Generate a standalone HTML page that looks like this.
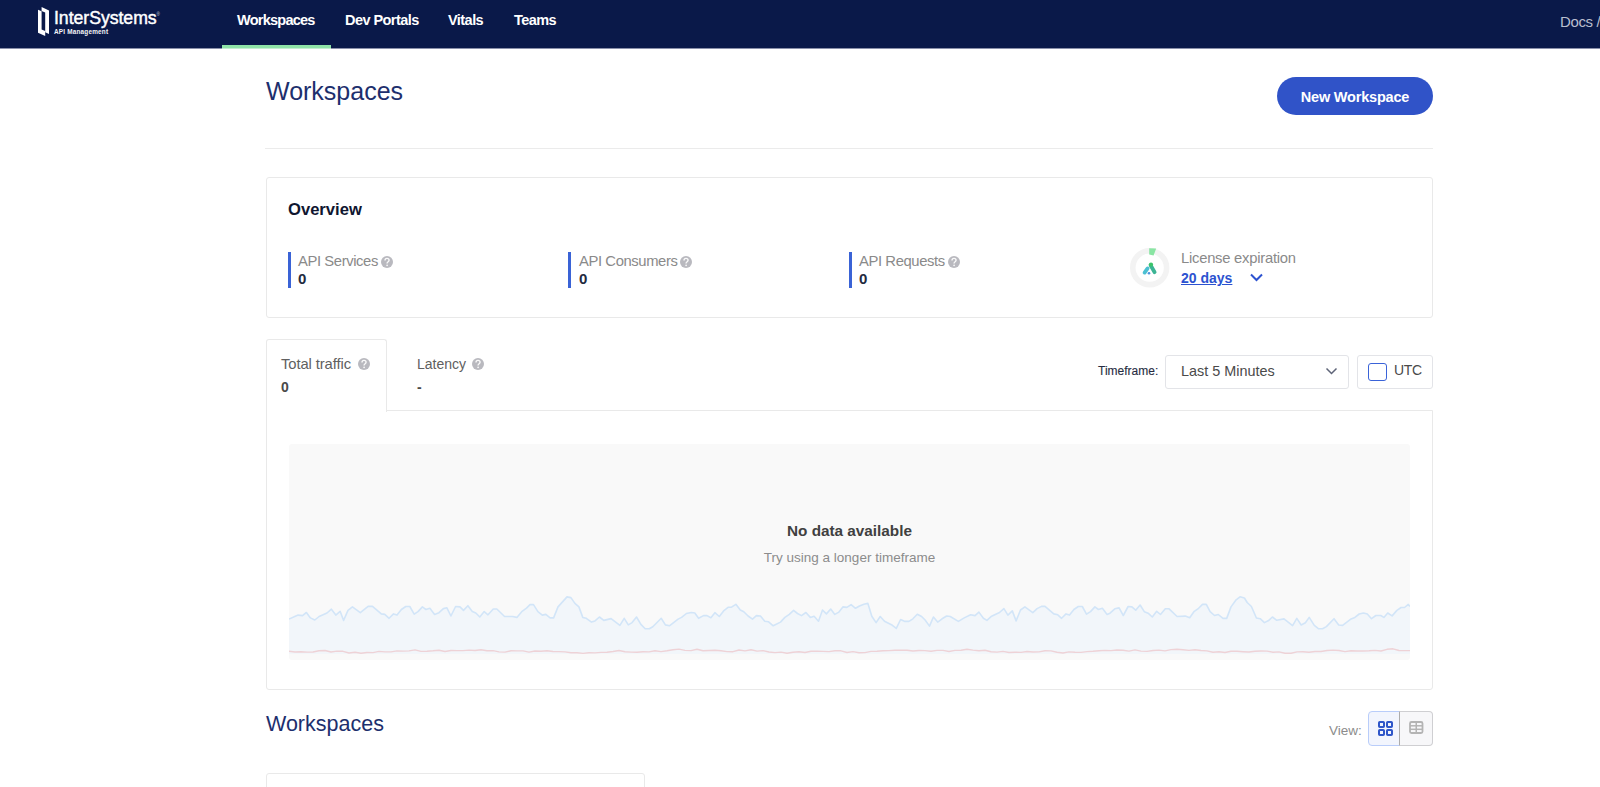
<!DOCTYPE html>
<html><head><meta charset="utf-8">
<style>
*{margin:0;padding:0;box-sizing:border-box}
html,body{width:1600px;height:787px;overflow:hidden;background:#fff;font-family:"Liberation Sans",sans-serif}
.a{position:absolute;white-space:nowrap}
#hdr{position:absolute;left:0;top:0;width:1600px;height:48px;background:#0a1949}
.nav{position:absolute;top:12px;font-size:14.5px;letter-spacing:-0.55px;font-weight:700;color:#fff;line-height:16px}
.card{position:absolute;border:1px solid #e9e9e9;border-radius:3px;background:#fff}
.lbl{font-size:14.8px;letter-spacing:-0.4px;color:#8a8a8a;line-height:16px}
.val{font-size:15px;font-weight:700;color:#232a3e;line-height:16px}
.bar{position:absolute;width:3px;height:36px;background:#3a63d6}
.help{position:absolute;width:12px;height:12px}
</style></head><body>
<div id="hdr">
  <svg class="a" style="left:0;top:0" width="60" height="48" viewBox="0 0 60 48">
    <path d="M38,9.7 L41.6,11.3 L41.6,29.4 L45.2,31 L45.2,36 L38,32.8 Z" fill="#fff"/>
    <path d="M41.6,7 L49,10.6 L49,34 L45.2,32.3 L45.2,12.6 L41.6,11 Z" fill="#fff"/>
  </svg>
  <div class="a" style="left:54px;top:8px;font-size:17.7px;font-weight:400;color:#fff;letter-spacing:-0.05px;line-height:20px;-webkit-text-stroke:0.45px #fff">InterSystems</div>
  <div class="a" style="left:156.5px;top:11.5px;font-size:4.5px;line-height:6px;color:#d0d4de">&#174;</div>
  <div class="a" style="left:54px;top:28px;font-size:6.4px;font-weight:700;letter-spacing:0.2px;color:#f4f5f8;line-height:7px">API Management</div>
  <div class="nav" style="left:237px;letter-spacing:-0.75px">Workspaces</div>
  <div class="nav" style="left:345px">Dev Portals</div>
  <div class="nav" style="left:448px">Vitals</div>
  <div class="nav" style="left:514px">Teams</div>
  <div class="a" style="left:0;top:48px;width:1600px;height:1px;background:#8a90aa"></div>
  <div class="a" style="left:222px;top:45px;width:109px;height:3px;background:#8fe3a8"></div>
  <div class="a" style="left:222px;top:48px;width:109px;height:1px;background:#c4f0d0"></div>
  <div class="a" style="left:1560px;top:13px;font-size:15px;letter-spacing:-0.35px;color:#b9bfcf;line-height:17px">Docs /</div>
</div>

<div class="a" style="left:266px;top:77px;font-size:25px;color:#1d2f6d;line-height:28px">Workspaces</div>
<div class="a" style="left:1277px;top:77px;width:156px;height:38px;border-radius:19px;background:#3053c8;color:#fff;font-size:14.5px;letter-spacing:-0.2px;font-weight:700;line-height:40px;text-align:center">New Workspace</div>
<div class="a" style="left:265px;top:148px;width:1168px;height:1px;background:#ebebeb"></div>

<div class="card" style="left:266px;top:177px;width:1167px;height:141px"></div>
<div class="a" style="left:288px;top:200px;font-size:16.6px;font-weight:700;color:#0f1630;line-height:20px">Overview</div>

<div class="bar" style="left:288px;top:252px"></div>
<div class="a lbl" style="left:298px;top:253px">API Services</div>
<div class="help" style="left:381px;top:256px"><svg width="12" height="12" viewBox="0 0 12 12" style="display:block"><circle cx="6" cy="6" r="6" fill="#b9b9bf"/><path d="M4,4.4 C4,3.1 4.9,2.4 6,2.4 C7.2,2.4 8.1,3.1 8.1,4.3 C8.1,5.5 6.2,5.8 6.1,7 L6.1,7.6" stroke="#fafafa" stroke-width="1.35" fill="none"/><circle cx="6.1" cy="9.35" r="0.85" fill="#fafafa"/></svg></div>
<div class="a val" style="left:298px;top:271px">0</div>

<div class="bar" style="left:568px;top:252px"></div>
<div class="a lbl" style="left:579px;top:253px">API Consumers</div>
<div class="help" style="left:680px;top:256px"><svg width="12" height="12" viewBox="0 0 12 12" style="display:block"><circle cx="6" cy="6" r="6" fill="#b9b9bf"/><path d="M4,4.4 C4,3.1 4.9,2.4 6,2.4 C7.2,2.4 8.1,3.1 8.1,4.3 C8.1,5.5 6.2,5.8 6.1,7 L6.1,7.6" stroke="#fafafa" stroke-width="1.35" fill="none"/><circle cx="6.1" cy="9.35" r="0.85" fill="#fafafa"/></svg></div>
<div class="a val" style="left:579px;top:271px">0</div>

<div class="bar" style="left:849px;top:252px"></div>
<div class="a lbl" style="left:859px;top:253px">API Requests</div>
<div class="help" style="left:948px;top:256px"><svg width="12" height="12" viewBox="0 0 12 12" style="display:block"><circle cx="6" cy="6" r="6" fill="#b9b9bf"/><path d="M4,4.4 C4,3.1 4.9,2.4 6,2.4 C7.2,2.4 8.1,3.1 8.1,4.3 C8.1,5.5 6.2,5.8 6.1,7 L6.1,7.6" stroke="#fafafa" stroke-width="1.35" fill="none"/><circle cx="6.1" cy="9.35" r="0.85" fill="#fafafa"/></svg></div>
<div class="a val" style="left:859px;top:271px">0</div>

<svg class="a" style="left:1128px;top:246px" width="44" height="44" viewBox="0 0 44 44">
  <circle cx="21.7" cy="21.7" r="16.9" fill="none" stroke="#f3f3f3" stroke-width="5.6"/>
  <path d="M21.2,2.2 L28.2,2.6 L25.6,9.4 L21.2,8.6 Z" fill="#8ae5a3"/>
  <line x1="22.6" y1="19.2" x2="26.6" y2="26.2" stroke="#3cb494" stroke-width="3.8" stroke-linecap="round"/>
  <line x1="19.6" y1="22.4" x2="16.6" y2="26.6" stroke="#4cc0d2" stroke-width="3.8" stroke-linecap="round"/>
  <circle cx="23" cy="18.6" r="2.1" fill="#3cc46a"/>
  <circle cx="21" cy="27.3" r="1.3" fill="#4d92de"/>
</svg>
<div class="a lbl" style="left:1181px;top:250px;letter-spacing:-0.25px">License expiration</div>
<div class="a" style="left:1181px;top:270px;font-size:14px;font-weight:700;color:#2c52d0;line-height:16px;text-decoration:underline">20 days</div>
<svg class="a" style="left:1249px;top:271.5px" width="15" height="10" viewBox="0 0 15 10"><path d="M2,2.5 L7.5,8 L13,2.5" fill="none" stroke="#2c52d0" stroke-width="2"/></svg>

<!-- chart card -->
<div class="card" style="left:266px;top:410px;width:1167px;height:280px;border-radius:0 0 3px 3px"></div>
<div class="a" style="left:266px;top:339px;width:121px;height:73px;border:1px solid #e9e9e9;border-bottom:none;border-radius:3px 3px 0 0;background:#fff"></div>
<div class="a" style="left:281px;top:356px;font-size:14.8px;letter-spacing:-0.1px;color:#606060;line-height:16px">Total traffic</div>
<div class="help" style="left:358px;top:358px"><svg width="12" height="12" viewBox="0 0 12 12" style="display:block"><circle cx="6" cy="6" r="6" fill="#b9b9bf"/><path d="M4,4.4 C4,3.1 4.9,2.4 6,2.4 C7.2,2.4 8.1,3.1 8.1,4.3 C8.1,5.5 6.2,5.8 6.1,7 L6.1,7.6" stroke="#fafafa" stroke-width="1.35" fill="none"/><circle cx="6.1" cy="9.35" r="0.85" fill="#fafafa"/></svg></div>
<div class="a" style="left:281px;top:379px;font-size:14px;font-weight:700;color:#4a4a4a;line-height:16px">0</div>
<div class="a" style="left:417px;top:356px;font-size:14px;color:#606060;line-height:16px">Latency</div>
<div class="help" style="left:472px;top:358px"><svg width="12" height="12" viewBox="0 0 12 12" style="display:block"><circle cx="6" cy="6" r="6" fill="#b9b9bf"/><path d="M4,4.4 C4,3.1 4.9,2.4 6,2.4 C7.2,2.4 8.1,3.1 8.1,4.3 C8.1,5.5 6.2,5.8 6.1,7 L6.1,7.6" stroke="#fafafa" stroke-width="1.35" fill="none"/><circle cx="6.1" cy="9.35" r="0.85" fill="#fafafa"/></svg></div>
<div class="a" style="left:417px;top:379px;font-size:14px;font-weight:700;color:#4a4a4a;line-height:16px">-</div>

<div class="a" style="left:1098px;top:364px;font-size:12px;color:#262c42;line-height:14px;-webkit-text-stroke:0.12px #262c42">Timeframe:</div>
<div class="a" style="left:1165px;top:355px;width:184px;height:34px;border:1px solid #e3e4e8;border-radius:3px;background:#fff"></div>
<div class="a" style="left:1181px;top:363px;font-size:14.4px;color:#4a4a4a;line-height:17px">Last 5 Minutes</div>
<svg class="a" style="left:1325px;top:366px" width="13" height="10" viewBox="0 0 13 10"><path d="M1.5,2.5 L6.5,7.5 L11.5,2.5" fill="none" stroke="#5e6478" stroke-width="1.5"/></svg>
<div class="a" style="left:1357px;top:355px;width:76px;height:34px;border:1px solid #e3e4e8;border-radius:3px;background:#fff"></div>
<div class="a" style="left:1368px;top:363px;width:19px;height:18px;border:1.5px solid #3a63d8;border-radius:3px"></div>
<div class="a" style="left:1394px;top:362px;font-size:14px;letter-spacing:-0.35px;color:#4a4a4a;line-height:16px">UTC</div>

<div class="a" style="left:289px;top:444px;width:1121px;height:216px;background:#f9f9f9;border-radius:3px;overflow:hidden">
<svg width="1121" height="215" viewBox="0 0 1121 215" style="position:absolute;left:0;top:0">
<path d="M0,210 L0.0,175.1 L9.1,171.1 L13.5,171.6 L17.4,168.5 L21.4,173.9 L25.8,176.0 L30.1,172.5 L38.0,169.0 L42.4,165.2 L46.8,171.1 L51.1,167.3 L54.6,176.4 L59.0,166.4 L63.4,162.9 L71.3,168.7 L79.1,162.4 L83.5,162.4 L92.3,169.9 L95.8,170.4 L100.1,174.3 L104.5,169.9 L108.0,171.1 L112.4,165.5 L116.8,162.5 L120.8,162.5 L125.2,170.2 L129.0,167.6 L133.4,162.9 L136.9,165.5 L140.9,164.3 L145.6,170.4 L150.0,168.7 L154.4,164.6 L157.9,163.8 L161.9,172.0 L166.6,162.5 L171.0,162.9 L174.5,166.4 L178.9,161.7 L183.3,167.6 L186.8,169.0 L190.8,173.0 L195.2,167.6 L199.0,170.8 L204.3,165.0 L207.8,165.0 L215.6,172.5 L223.5,172.5 L227.9,173.4 L233.1,167.3 L237.5,164.1 L241.0,160.6 L244.5,160.6 L248.9,167.6 L253.3,171.1 L256.8,170.4 L261.1,173.9 L264.6,173.9 L269.0,162.9 L278.0,152.9 L281.9,153.6 L285.9,159.4 L289.9,162.9 L293.8,173.4 L297.3,174.3 L302.5,178.1 L306.0,176.9 L310.4,173.0 L314.8,176.4 L322.1,174.6 L330.9,181.3 L335.2,174.3 L339.3,180.9 L343.1,178.6 L347.5,173.0 L351.9,180.4 L356.2,184.8 L360.3,184.8 L363.8,182.7 L372.2,174.3 L376.4,180.9 L380.4,181.8 L389.1,175.1 L392.6,173.4 L397.4,169.5 L402.3,168.5 L405.8,169.0 L409.6,174.3 L414.5,171.6 L418.0,171.6 L421.9,173.7 L425.9,168.7 L430.3,172.5 L434.6,166.9 L439.4,163.2 L442.5,163.2 L446.9,160.3 L451.3,166.0 L454.8,167.8 L459.1,172.0 L463.5,175.1 L467.4,171.6 L471.4,172.0 L475.8,177.2 L479.6,177.8 L484.2,181.8 L491.5,178.1 L495.9,173.4 L500.3,170.4 L504.6,166.4 L508.5,169.5 L512.5,171.6 L516.9,168.5 L521.3,173.4 L525.1,172.2 L529.5,177.2 L533.5,166.0 L537.4,169.9 L541.7,165.0 L545.8,170.4 L549.9,168.1 L553.9,162.9 L557.9,163.4 L562.1,160.6 L566.5,164.3 L570.5,162.0 L574.9,160.3 L578.9,159.4 L582.8,172.2 L587.1,178.6 L591.2,172.5 L595.5,177.2 L603.4,181.3 L607.3,184.4 L611.6,175.5 L616.0,177.4 L619.9,177.4 L623.9,174.8 L628.3,170.2 L632.6,172.5 L636.1,176.0 L640.5,182.1 L644.4,173.0 L648.7,178.1 L653.1,174.8 L657.7,172.0 L661.2,172.5 L669.4,177.4 L675.2,173.9 L681.6,170.8 L686.0,171.6 L689.9,168.1 L694.4,174.3 L697.9,176.4 L702.6,172.2 L710.5,168.5 L714.9,164.6 L718.9,171.1 L723.3,166.9 L727.1,176.9 L731.5,166.0 L735.9,162.9 L743.8,168.7 L748.1,164.6 L752.5,162.4 L756.0,162.4 L764.8,169.9 L768.8,170.8 L772.6,174.3 L777.0,169.9 L780.5,171.1 L784.9,165.5 L789.3,162.5 L793.3,162.5 L797.5,170.2 L801.5,167.6 L805.9,162.9 L809.4,165.5 L813.4,164.3 L818.1,170.4 L821.0,169.2 L825.8,164.8 L830.1,163.9 L834.3,171.5 L839.1,162.5 L842.9,162.9 L846.7,166.2 L851.1,161.0 L855.3,167.7 L859.1,169.2 L863.3,173.0 L867.7,167.3 L871.5,170.5 L876.3,164.8 L880.1,164.8 L888.1,172.5 L896.3,172.1 L900.7,173.8 L904.9,167.7 L909.6,164.3 L913.5,160.4 L917.3,160.4 L921.1,167.7 L925.5,171.5 L929.3,170.5 L934.0,174.4 L937.7,174.4 L942.0,162.9 L946.8,156.2 L951.0,152.8 L955.4,154.0 L958.2,158.5 L962.4,162.5 L967.4,174.0 L971.2,174.7 L975.4,178.6 L979.2,176.8 L983.4,173.0 L987.8,176.3 L995.0,174.9 L1003.6,181.6 L1007.8,174.4 L1012.2,181.0 L1016.4,178.7 L1020.2,173.4 L1025.3,181.4 L1029.7,184.8 L1033.5,184.8 L1037.4,182.6 L1045.0,174.7 L1049.7,181.0 L1053.6,181.4 L1062.1,174.9 L1065.9,173.4 L1070.2,170.0 L1074.5,169.0 L1078.3,170.0 L1082.5,174.7 L1086.9,171.5 L1091.7,171.5 L1094.9,173.4 L1098.7,169.0 L1103.1,171.9 L1107.9,166.4 L1112.1,163.5 L1115.5,163.5 L1119.3,160.4 L1121.0,162.5 L1121,210 Z" fill="#f2f6fa"/>
<polyline points="0.0,175.1 9.1,171.1 13.5,171.6 17.4,168.5 21.4,173.9 25.8,176.0 30.1,172.5 38.0,169.0 42.4,165.2 46.8,171.1 51.1,167.3 54.6,176.4 59.0,166.4 63.4,162.9 71.3,168.7 79.1,162.4 83.5,162.4 92.3,169.9 95.8,170.4 100.1,174.3 104.5,169.9 108.0,171.1 112.4,165.5 116.8,162.5 120.8,162.5 125.2,170.2 129.0,167.6 133.4,162.9 136.9,165.5 140.9,164.3 145.6,170.4 150.0,168.7 154.4,164.6 157.9,163.8 161.9,172.0 166.6,162.5 171.0,162.9 174.5,166.4 178.9,161.7 183.3,167.6 186.8,169.0 190.8,173.0 195.2,167.6 199.0,170.8 204.3,165.0 207.8,165.0 215.6,172.5 223.5,172.5 227.9,173.4 233.1,167.3 237.5,164.1 241.0,160.6 244.5,160.6 248.9,167.6 253.3,171.1 256.8,170.4 261.1,173.9 264.6,173.9 269.0,162.9 278.0,152.9 281.9,153.6 285.9,159.4 289.9,162.9 293.8,173.4 297.3,174.3 302.5,178.1 306.0,176.9 310.4,173.0 314.8,176.4 322.1,174.6 330.9,181.3 335.2,174.3 339.3,180.9 343.1,178.6 347.5,173.0 351.9,180.4 356.2,184.8 360.3,184.8 363.8,182.7 372.2,174.3 376.4,180.9 380.4,181.8 389.1,175.1 392.6,173.4 397.4,169.5 402.3,168.5 405.8,169.0 409.6,174.3 414.5,171.6 418.0,171.6 421.9,173.7 425.9,168.7 430.3,172.5 434.6,166.9 439.4,163.2 442.5,163.2 446.9,160.3 451.3,166.0 454.8,167.8 459.1,172.0 463.5,175.1 467.4,171.6 471.4,172.0 475.8,177.2 479.6,177.8 484.2,181.8 491.5,178.1 495.9,173.4 500.3,170.4 504.6,166.4 508.5,169.5 512.5,171.6 516.9,168.5 521.3,173.4 525.1,172.2 529.5,177.2 533.5,166.0 537.4,169.9 541.7,165.0 545.8,170.4 549.9,168.1 553.9,162.9 557.9,163.4 562.1,160.6 566.5,164.3 570.5,162.0 574.9,160.3 578.9,159.4 582.8,172.2 587.1,178.6 591.2,172.5 595.5,177.2 603.4,181.3 607.3,184.4 611.6,175.5 616.0,177.4 619.9,177.4 623.9,174.8 628.3,170.2 632.6,172.5 636.1,176.0 640.5,182.1 644.4,173.0 648.7,178.1 653.1,174.8 657.7,172.0 661.2,172.5 669.4,177.4 675.2,173.9 681.6,170.8 686.0,171.6 689.9,168.1 694.4,174.3 697.9,176.4 702.6,172.2 710.5,168.5 714.9,164.6 718.9,171.1 723.3,166.9 727.1,176.9 731.5,166.0 735.9,162.9 743.8,168.7 748.1,164.6 752.5,162.4 756.0,162.4 764.8,169.9 768.8,170.8 772.6,174.3 777.0,169.9 780.5,171.1 784.9,165.5 789.3,162.5 793.3,162.5 797.5,170.2 801.5,167.6 805.9,162.9 809.4,165.5 813.4,164.3 818.1,170.4 821.0,169.2 825.8,164.8 830.1,163.9 834.3,171.5 839.1,162.5 842.9,162.9 846.7,166.2 851.1,161.0 855.3,167.7 859.1,169.2 863.3,173.0 867.7,167.3 871.5,170.5 876.3,164.8 880.1,164.8 888.1,172.5 896.3,172.1 900.7,173.8 904.9,167.7 909.6,164.3 913.5,160.4 917.3,160.4 921.1,167.7 925.5,171.5 929.3,170.5 934.0,174.4 937.7,174.4 942.0,162.9 946.8,156.2 951.0,152.8 955.4,154.0 958.2,158.5 962.4,162.5 967.4,174.0 971.2,174.7 975.4,178.6 979.2,176.8 983.4,173.0 987.8,176.3 995.0,174.9 1003.6,181.6 1007.8,174.4 1012.2,181.0 1016.4,178.7 1020.2,173.4 1025.3,181.4 1029.7,184.8 1033.5,184.8 1037.4,182.6 1045.0,174.7 1049.7,181.0 1053.6,181.4 1062.1,174.9 1065.9,173.4 1070.2,170.0 1074.5,169.0 1078.3,170.0 1082.5,174.7 1086.9,171.5 1091.7,171.5 1094.9,173.4 1098.7,169.0 1103.1,171.9 1107.9,166.4 1112.1,163.5 1115.5,163.5 1119.3,160.4 1121.0,162.5" fill="none" stroke="#d2e5f8" stroke-width="1.6" stroke-linejoin="round"/>
<polyline points="0.0,207.2 6.0,208.0 12.0,207.8 18.0,208.1 24.0,208.0 30.0,206.8 36.0,206.5 42.0,208.0 48.0,207.1 54.0,207.3 60.0,209.0 66.0,208.3 72.0,209.2 78.0,208.5 84.0,208.6 90.0,207.4 96.0,207.9 102.0,207.9 108.0,206.9 114.0,207.1 120.0,206.9 126.0,205.9 132.0,207.4 138.0,207.2 144.0,206.8 150.0,206.2 156.0,207.5 162.0,206.5 168.0,206.6 174.0,206.6 180.0,206.1 186.0,206.5 192.0,205.8 198.0,206.8 204.0,206.6 210.0,207.9 216.0,208.1 222.0,206.8 228.0,206.9 234.0,206.9 240.0,208.1 246.0,207.0 252.0,207.3 258.0,206.8 264.0,207.5 270.0,207.6 276.0,207.9 282.0,208.7 288.0,208.8 294.0,209.4 300.0,208.8 306.0,208.9 312.0,208.4 318.0,208.3 324.0,207.5 330.0,206.5 336.0,207.8 342.0,208.1 348.0,208.2 354.0,207.7 360.0,207.9 366.0,206.8 372.0,207.6 378.0,206.8 384.0,205.8 390.0,205.1 396.0,206.4 402.0,206.6 408.0,205.2 414.0,206.8 420.0,206.5 426.0,206.3 432.0,206.7 438.0,207.6 444.0,207.7 450.0,206.0 456.0,206.9 462.0,205.8 468.0,207.1 474.0,206.6 480.0,208.0 486.0,208.6 492.0,208.1 498.0,209.3 504.0,208.2 510.0,207.8 516.0,208.5 522.0,207.2 528.0,207.2 534.0,207.4 540.0,207.6 546.0,206.8 552.0,206.8 558.0,208.5 564.0,207.6 570.0,208.8 576.0,208.6 582.0,207.4 588.0,207.2 594.0,206.8 600.0,206.6 606.0,206.2 612.0,206.1 618.0,206.2 624.0,207.0 630.0,206.5 636.0,206.6 642.0,207.3 648.0,206.4 654.0,206.4 660.0,207.5 666.0,206.4 672.0,206.3 678.0,205.3 684.0,206.1 690.0,206.7 696.0,206.2 702.0,207.7 708.0,208.1 714.0,207.4 720.0,208.5 726.0,208.2 732.0,208.4 738.0,207.5 744.0,208.0 750.0,207.9 756.0,206.7 762.0,206.9 768.0,208.3 774.0,209.0 780.0,207.9 786.0,208.3 792.0,208.4 798.0,207.6 804.0,207.3 810.0,206.7 816.0,206.4 822.0,206.6 828.0,206.0 834.0,206.2 840.0,207.1 846.0,205.9 852.0,207.1 858.0,207.4 864.0,206.5 870.0,206.1 876.0,206.9 882.0,205.6 888.0,205.3 894.0,205.7 900.0,206.4 906.0,205.7 912.0,206.5 918.0,206.9 924.0,208.2 930.0,207.7 936.0,208.5 942.0,207.2 948.0,207.3 954.0,207.7 960.0,208.0 966.0,207.3 972.0,207.0 978.0,207.1 984.0,208.2 990.0,207.9 996.0,209.2 1002.0,209.2 1008.0,207.9 1014.0,207.7 1020.0,208.2 1026.0,207.5 1032.0,207.5 1038.0,206.5 1044.0,206.1 1050.0,206.5 1056.0,207.6 1062.0,206.8 1068.0,207.0 1074.0,207.0 1080.0,206.8 1086.0,206.4 1092.0,207.0 1098.0,205.3 1104.0,204.8 1110.0,206.5 1121.0,206.6" fill="none" stroke="#eed2d6" stroke-width="1.4" stroke-linejoin="round"/>
</svg>
</div>
<div class="a" style="left:289px;top:522px;width:1121px;text-align:center;font-size:15.3px;font-weight:700;color:#404040;line-height:18px">No data available</div>
<div class="a" style="left:289px;top:550px;width:1121px;text-align:center;font-size:13.5px;color:#8c8c8c;line-height:16px">Try using a longer timeframe</div>

<div class="a" style="left:266px;top:712px;font-size:21.5px;color:#1d2f6d;line-height:24px">Workspaces</div>
<div class="a" style="left:1329px;top:723px;font-size:13.5px;color:#8c8c8c;line-height:16px">View:</div>
<div class="a" style="left:1368px;top:711px;width:32px;height:35px;border:1px solid #b9cdfa;border-radius:4px 0 0 4px;background:#f2f5fd"></div>
<div class="a" style="left:1399px;top:711px;width:34px;height:35px;border:1px solid #cfcfd2;border-left:1px solid #acacac;border-radius:0 4px 4px 0;background:#f7f7f9"></div>
<svg class="a" style="left:1377px;top:720px" width="17" height="17" viewBox="0 0 17 17">
  <rect x="2" y="2" width="5" height="5" fill="none" stroke="#2e56c9" stroke-width="2" rx="0.8"/>
  <rect x="10" y="2" width="5" height="5" fill="none" stroke="#2e56c9" stroke-width="2" rx="0.8"/>
  <rect x="2" y="10" width="5" height="5" fill="none" stroke="#2e56c9" stroke-width="2" rx="0.8"/>
  <rect x="10" y="10" width="5" height="5" fill="none" stroke="#2e56c9" stroke-width="2" rx="0.8"/>
</svg>
<svg class="a" style="left:1408px;top:720px" width="16" height="15" viewBox="0 0 16 15">
  <rect x="2" y="2" width="12.5" height="11" rx="1.5" fill="none" stroke="#b4b4b4" stroke-width="1.8"/>
  <line x1="8.25" y1="2" x2="8.25" y2="13" stroke="#b4b4b4" stroke-width="1.5"/>
  <line x1="2" y1="5.8" x2="14.5" y2="5.8" stroke="#b4b4b4" stroke-width="1.5"/>
  <line x1="2" y1="9.3" x2="14.5" y2="9.3" stroke="#b4b4b4" stroke-width="1.5"/>
</svg>
<div class="card" style="left:266px;top:773px;width:379px;height:40px"></div>
</body></html>
